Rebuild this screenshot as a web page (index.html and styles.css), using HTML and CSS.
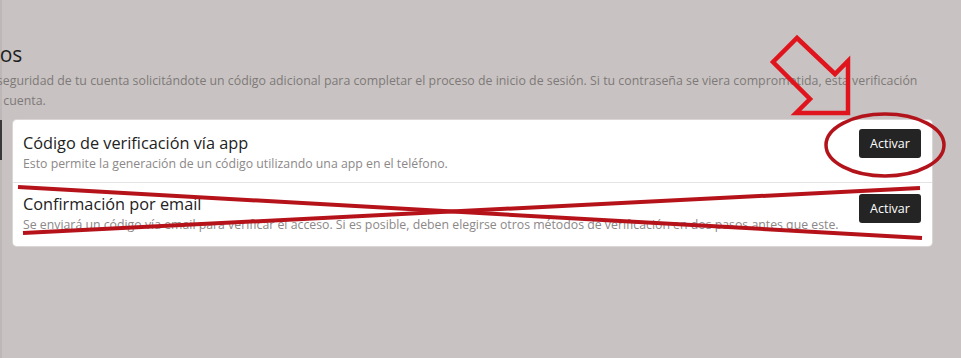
FILE: index.html
```html
<!DOCTYPE html>
<html lang="es">
<head>
<meta charset="utf-8">
<title>Métodos</title>
<link rel="stylesheet" href="styles.css">
</head>
<body>
<div class="page">
  <section class="intro">
    <h2 class="heading">Métodos</h2>
    <p class="lead">Mejora la seguridad de tu cuenta solicitándote un código adicional para completar el proceso de inicio de sesión. Si tu contraseña se viera comprometida, esta verificación protege tu cuenta.</p>
  </section>
  <div class="methods">
    <span class="side-mark"></span>
    <div class="card">
      <div class="method">
        <div class="method-text">
          <div class="method-title">Código de verificación vía app</div>
          <div class="method-desc">Esto permite la generación de un código utilizando una app en el teléfono.</div>
        </div>
        <button class="btn">Activar</button>
      </div>
      <div class="method method-second">
        <div class="method-text">
          <div class="method-title">Confirmación por email</div>
          <div class="method-desc">Se enviará un código vía email para verificar el acceso. Si es posible, deben elegirse otros métodos de verificación en dos pasos antes que este.</div>
        </div>
        <button class="btn">Activar</button>
      </div>
    </div>
  </div>
  <svg class="marks" width="961" height="358" viewBox="0 0 961 358">
    <polygon points="797,38 835,74 848,61 848,113 796,113 810,99 773,62" fill="none" stroke="#e0141c" stroke-width="4.5" stroke-linejoin="miter"/>
    <ellipse cx="885" cy="145" rx="59" ry="31" fill="none" stroke="#b3141b" stroke-width="3.5"/>
    <line x1="18" y1="187" x2="922" y2="238" stroke="#b5121a" stroke-width="4"/>
    <line x1="23" y1="233" x2="920" y2="188" stroke="#b5121a" stroke-width="4"/>
  </svg>
</div>
</body>
</html>
```
FILE: styles.css
```css
html, body {
  margin: 0;
  padding: 0;
}
body {
  background: #c8c3c2;
  font-family: "Open Sans", "Noto Sans", sans-serif;
  overflow: hidden;
  width: 961px;
  height: 358px;
}
.page {
  position: relative;
  height: 358px;
  border-left: 2px solid #bdb8b7;
  box-sizing: border-box;
}
.intro {
  margin-left: -62px;
  padding-top: 40px;
}
.heading {
  margin: 0 0 0 -4px;
  font-size: 21px;
  font-weight: 400;
  line-height: 28px;
  color: #1f1f1f;
}
.lead {
  margin: 3px 0 0;
  font-size: 12.35px;
  line-height: 20px;
  color: #7e7978;
  width: 1005px;
}
.methods {
  display: flex;
  align-items: flex-start;
  margin-top: 9px;
}
.side-mark {
  width: 2px;
  height: 40px;
  margin-left: -2px;
  background: #3a3838;
}
.card {
  margin-left: 11px;
  width: 919px;
  background: #fff;
  border-radius: 4px;
  box-shadow: 0 0 0 1px #d9d6d5;
}
.method {
  display: flex;
  align-items: flex-start;
  padding: 11px 11px 9px 10px;
}
.method-second {
  border-top: 1px solid #e4e2e2;
  padding-top: 9px;
  padding-bottom: 12px;
}
.method-text {
  flex: 1;
}
.method-title {
  font-size: 16.3px;
  line-height: 24px;
  color: #222;
}
.method-desc {
  font-size: 12.3px;
  line-height: 18px;
  color: #8c8888;
}
.btn {
  margin-top: -2px;
  background: #242424;
  color: #fff;
  border: none;
  border-radius: 3px;
  font-family: "Open Sans", "Noto Sans", sans-serif;
  font-size: 12.5px;
  width: 62px;
  height: 29px;
  padding: 0;
}
.method-second .btn {
  margin-top: 2px;
}
.marks {
  position: absolute;
  left: -2px;
  top: 0;
  pointer-events: none;
}
```
